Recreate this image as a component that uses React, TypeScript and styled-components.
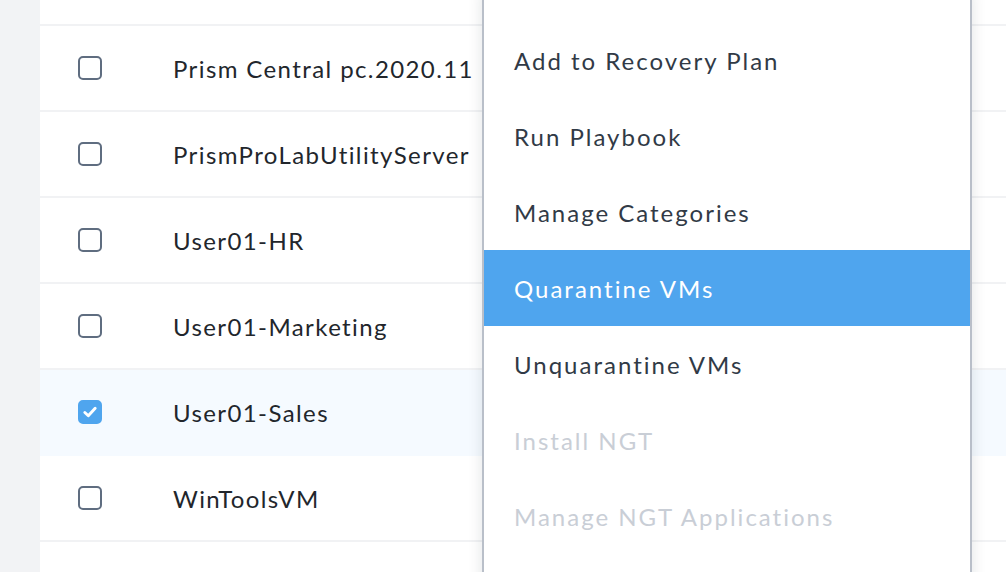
import React from 'react'
import styled, { createGlobalStyle } from 'styled-components'

const GlobalStyle = createGlobalStyle`
  html, body {
    margin: 0;
    padding: 0;
    background: #ffffff;
    overflow: hidden;
  }
  body {
    font-family: Lato, 'Liberation Sans', sans-serif;
  }
`

interface Vm {
  name: string
  selected?: boolean
}

const vms: Vm[] = [
  { name: 'Prism Central pc.2020.11' },
  { name: 'PrismProLabUtilityServer' },
  { name: 'User01-HR' },
  { name: 'User01-Marketing' },
  { name: 'User01-Sales', selected: true },
  { name: 'WinToolsVM' },
  { name: '' },
]

interface Action {
  label: string
  active?: boolean
  disabled?: boolean
}

const actions: Action[] = [
  { label: 'Add to Recovery Plan' },
  { label: 'Run Playbook' },
  { label: 'Manage Categories' },
  { label: 'Quarantine VMs', active: true },
  { label: 'Unquarantine VMs' },
  { label: 'Install NGT', disabled: true },
  { label: 'Manage NGT Applications', disabled: true },
]

const Checkbox: React.FC<{ checked?: boolean }> = ({ checked }) => (
  <Box $checked={checked}>
    {checked && (
      <svg width='18' height='18' viewBox='0 0 16 16'>
        <path
          d='M3.4 8.4 L6.5 11.3 L12.6 4.7'
          fill='none'
          stroke='#ffffff'
          strokeWidth='2.6'
          strokeLinecap='round'
          strokeLinejoin='round'
        />
      </svg>
    )}
  </Box>
)

const App: React.FC = () => {
  return (
    <Page>
      <GlobalStyle />
      <Gutter />
      <Table>
        <TopRow />
        {vms.map((vm, i) => (
          <Row key={i} $selected={vm.selected}>
            <CheckCell>
              <Checkbox checked={vm.selected} />
            </CheckCell>
            <Name>{vm.name}</Name>
          </Row>
        ))}
        <Menu>
          {actions.map((a) => (
            <MenuItem key={a.label} $active={a.active} $disabled={a.disabled}>
              {a.label}
            </MenuItem>
          ))}
        </Menu>
      </Table>
    </Page>
  )
}

const Page = styled.div`
  display: flex;
  width: 1006px;
  height: 572px;
  overflow: hidden;
`
const Gutter = styled.div`
  width: 40px;
  flex-shrink: 0;
  background: #f2f3f5;
`
const Table = styled.div`
  position: relative;
  flex: 1;
  display: flex;
  flex-direction: column;
`
const TopRow = styled.div`
  height: 24px;
  flex-shrink: 0;
  border-bottom: 2px solid #f1f2f4;
`
const Row = styled.div<{ $selected?: boolean }>`
  display: flex;
  align-items: center;
  height: 84px;
  flex-shrink: 0;
  border-bottom: 2px solid ${(p) => (p.$selected ? '#f5faff' : '#f1f2f4')};
  background: ${(p) => (p.$selected ? '#f5faff' : '#ffffff')};
`
const CheckCell = styled.div`
  width: 133px;
  padding-left: 38px;
  box-sizing: border-box;
  display: flex;
  align-items: center;
`
const Box = styled.div<{ $checked?: boolean }>`
  width: 24px;
  height: 24px;
  box-sizing: border-box;
  border-radius: 5px;
  display: flex;
  align-items: center;
  justify-content: center;
  border: 2px solid ${(p) => (p.$checked ? '#4fa5ee' : '#5f6d80')};
  background: ${(p) => (p.$checked ? '#4fa5ee' : '#ffffff')};
`
const Name = styled.div`
  font-size: 24px;
  letter-spacing: 1.4px;
  color: #22262c;
  white-space: nowrap;
`
const Menu = styled.div`
  position: absolute;
  left: 442px;
  top: -10px;
  width: 486px;
  height: 620px;
  padding-top: 32px;
  background: #ffffff;
  border-left: 2px solid #b9bfc9;
  border-right: 2px solid #b9bfc9;
  box-shadow: 0 0 14px rgba(20, 30, 45, 0.12);
`
const MenuItem = styled.div<{ $active?: boolean; $disabled?: boolean }>`
  height: 76px;
  display: flex;
  align-items: center;
  padding-left: 30px;
  font-size: 24px;
  letter-spacing: 2px;
  white-space: nowrap;
  background: ${(p) => (p.$active ? '#4fa5ee' : 'transparent')};
  color: ${(p) => (p.$active ? '#ffffff' : p.$disabled ? '#c9ced6' : '#313a46')};
`

export default App
